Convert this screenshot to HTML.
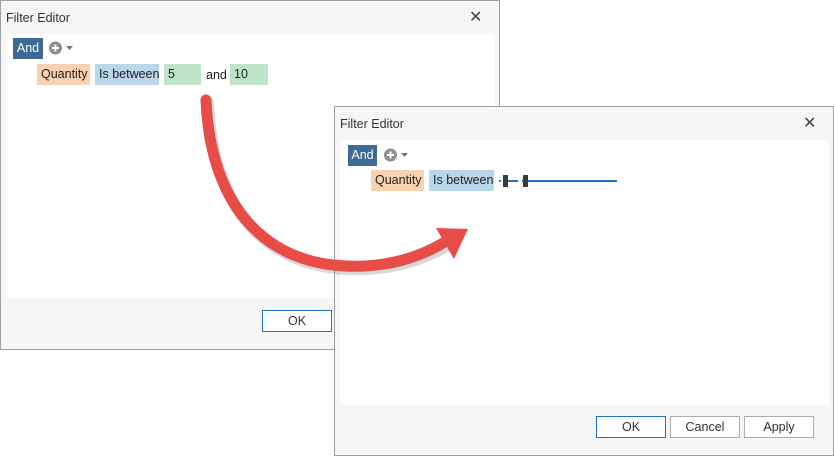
<!DOCTYPE html>
<html><head><style>
*{margin:0;padding:0;box-sizing:border-box}
body{width:834px;height:456px;background:#fff;position:relative;overflow:hidden;font-family:"Liberation Sans",sans-serif;font-size:12px;color:#222}
.win{position:absolute;background:#f6f6f6;border:1px solid #a0a0a0}
.title{position:absolute;left:5px;top:10px;font-size:12.5px;color:#333}
.x{position:absolute;font-size:16px;color:#444}
.content{position:absolute;background:#fff}
.chip{position:absolute;height:21px;line-height:21px;padding-left:4px;font-size:12.5px;white-space:nowrap}
.and{background:#3e6a98;color:#fff;text-align:center;padding:0}
.q{background:#f9d3b1}.b{background:#bad7ea}.g{background:#bfe4c8}
.btn{position:absolute;height:22px;border:1px solid #adadad;background:#fff;text-align:center;line-height:20px;font-size:12.5px;color:#333}
.ok{border-color:#1f72c0}
</style></head><body>
<div class="win" style="left:0;top:0;width:500px;height:350px">
<div class="title">Filter Editor</div><div class="x" style="left:468px;top:6px">✕</div>
<div class="content" style="left:5px;top:33px;width:489px;height:264px">
<div class="chip and" style="left:7px;top:4px;width:30px">And</div>
<svg style="position:absolute;left:42px;top:6px" width="30" height="16"><circle cx="7.5" cy="8" r="6.5" fill="#8f8f8f"/><path d="M7.5 4.5v7M4 8h7" stroke="#fff" stroke-width="2"/><path d="M18 6h7l-3.5 4z" fill="#777"/></svg>
<div class="chip q" style="left:31px;top:30px;width:53px">Quantity</div>
<div class="chip b" style="left:89px;top:30px;width:64px">Is between</div>
<div class="chip g" style="left:158px;top:30px;width:37px">5</div>
<div style="position:absolute;left:200px;top:34px;font-size:12.5px">and</div>
<div class="chip g" style="left:224px;top:30px;width:38px">10</div>
</div>
<div class="btn ok" style="left:261px;top:309px;width:70px">OK</div>
</div>
<div class="win" style="left:334px;top:106px;width:500px;height:350px">
<div class="title">Filter Editor</div><div class="x" style="left:468px;top:6px">✕</div>
<div class="content" style="left:5px;top:33px;width:489px;height:265px">
<div class="chip and" style="left:8px;top:5px;width:29px">And</div>
<svg style="position:absolute;left:43px;top:7px" width="30" height="16"><circle cx="7.5" cy="8" r="6.5" fill="#8f8f8f"/><path d="M7.5 4.5v7M4 8h7" stroke="#fff" stroke-width="2"/><path d="M18 6h7l-3.5 4z" fill="#777"/></svg>
<div class="chip q" style="left:31px;top:30px;width:53px">Quantity</div>
<div class="chip b" style="left:89px;top:30px;width:65px">Is between</div>
<svg style="position:absolute;left:158px;top:33px" width="120" height="16"><path d="M1 8h2M6 8h14M24 8h95" stroke="#1f72c0" stroke-width="2"/><rect x="5" y="2" width="5" height="12" fill="#3a3a3a"/><rect x="25" y="2" width="5" height="12" fill="#3a3a3a"/></svg>
</div>
<div class="btn ok" style="left:261px;top:309px;width:70px">OK</div>
<div class="btn" style="left:335px;top:309px;width:70px">Cancel</div>
<div class="btn" style="left:409px;top:309px;width:70px">Apply</div>
</div>
<svg style="position:absolute;left:0;top:0" width="834" height="456">
<path d="M206 100 C210 200 260 262 345 266 C385 268 420 258 450 240" fill="none" stroke="rgba(0,0,0,0.15)" stroke-width="12" stroke-linecap="round" transform="translate(2,3)"/>
<path d="M206 100 C210 200 260 262 345 266 C385 268 420 258 448 240" fill="none" stroke="#e84c47" stroke-width="11" stroke-linecap="round"/>
<path d="M436 228 L468 229 L454 259 Z" fill="#e84c47"/>
</svg>
</body></html>
